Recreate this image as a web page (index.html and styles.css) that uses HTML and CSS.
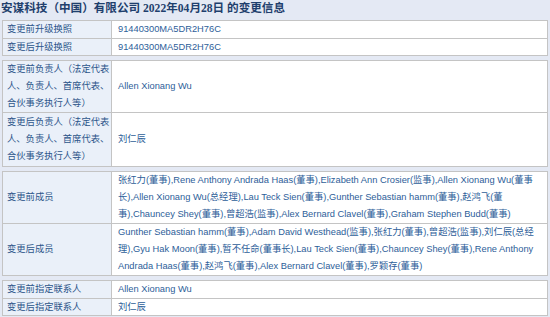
FILE: index.html
```html
<!DOCTYPE html>
<html lang="zh-CN">
<head>
<meta charset="utf-8">
<title>变更信息</title>
<link rel="stylesheet" href="styles.css">
</head>
<body>
<div class="title">安谋科技（中国）有限公司 2022年04月28日 的变更信息</div>
<table class="grp">
  <tr class="single"><td class="lbl">变更前升级换照</td><td class="val">91440300MA5DR2H76C</td></tr>
  <tr class="single"><td class="lbl">变更后升级换照</td><td class="val">91440300MA5DR2H76C</td></tr>
</table>
<table class="grp">
  <tr><td class="lbl">变更前负责人（法定代表<br>人、负责人、首席代表、<br>合伙事务执行人等）</td><td class="val">Allen Xionang Wu</td></tr>
  <tr class="pad"><td class="lbl">变更后负责人（法定代表<br>人、负责人、首席代表、<br>合伙事务执行人等）</td><td class="val">刘仁辰</td></tr>
</table>
<table class="grp">
  <tr><td class="lbl">变更前成员</td><td class="val">张红力(董事),Rene Anthony Andrada Haas(董事),Elizabeth Ann Crosier(监事),Allen Xionang Wu(董事<br>长),Allen Xionang Wu(总经理),Lau Teck Sien(董事),Gunther Sebastian hamm(董事),赵鸿飞(董<br>事),Chauncey Shey(董事),曾超浩(监事),Alex Bernard Clavel(董事),Graham Stephen Budd(董事)</td></tr>
  <tr><td class="lbl">变更后成员</td><td class="val">Gunther Sebastian hamm(董事),Adam David Westhead(监事),张红力(董事),曾超浩(监事),刘仁辰(总经<br>理),Gyu Hak Moon(董事),暂不任命(董事长),Lau Teck Sien(董事),Chauncey Shey(董事),Rene Anthony<br>Andrada Haas(董事),赵鸿飞(董事),Alex Bernard Clavel(董事),罗颖存(董事)</td></tr>
</table>
<table class="grp">
  <tr class="single"><td class="lbl">变更前指定联系人</td><td class="val">Allen Xionang Wu</td></tr>
  <tr class="single"><td class="lbl">变更后指定联系人</td><td class="val">刘仁辰</td></tr>
</table>
</body>
</html>
```

FILE: styles.css
```css
html, body {
  margin: 0;
  padding: 0;
}
body {
  background: #e4e9f4;
  font-family: "Liberation Sans", "Noto Sans CJK SC", sans-serif;
  font-size: 9.3px;
  color: #2f5a8e;
}
.title {
  height: 20px;
  line-height: 17px;
  padding-left: 1px;
  font-family: "Liberation Serif", "Noto Sans CJK SC", serif;
  font-size: 11.6px;
  font-weight: 600;
  color: #1f3f6d;
  white-space: nowrap;
}
.grp {
  margin: 0 0 4px 2px;
  width: 546px;
  border-collapse: collapse;
  border: 1px solid #c4c4c4;
  background: #fff;
}
.grp td {
  border: 1px solid #c4c4c4;
  padding: 0;
  line-height: 17px;
  white-space: nowrap;
  vertical-align: middle;
}
.grp .single td {
  line-height: 16.5px;
}
.grp .pad td {
  padding: 1px 0;
}
.lbl {
  width: 104px;
  padding-left: 4px !important;
  background: #eaf0f9;
  color: #2c558a;
}
.val {
  padding-left: 6px !important;
  color: #2d5e99;
}
```
